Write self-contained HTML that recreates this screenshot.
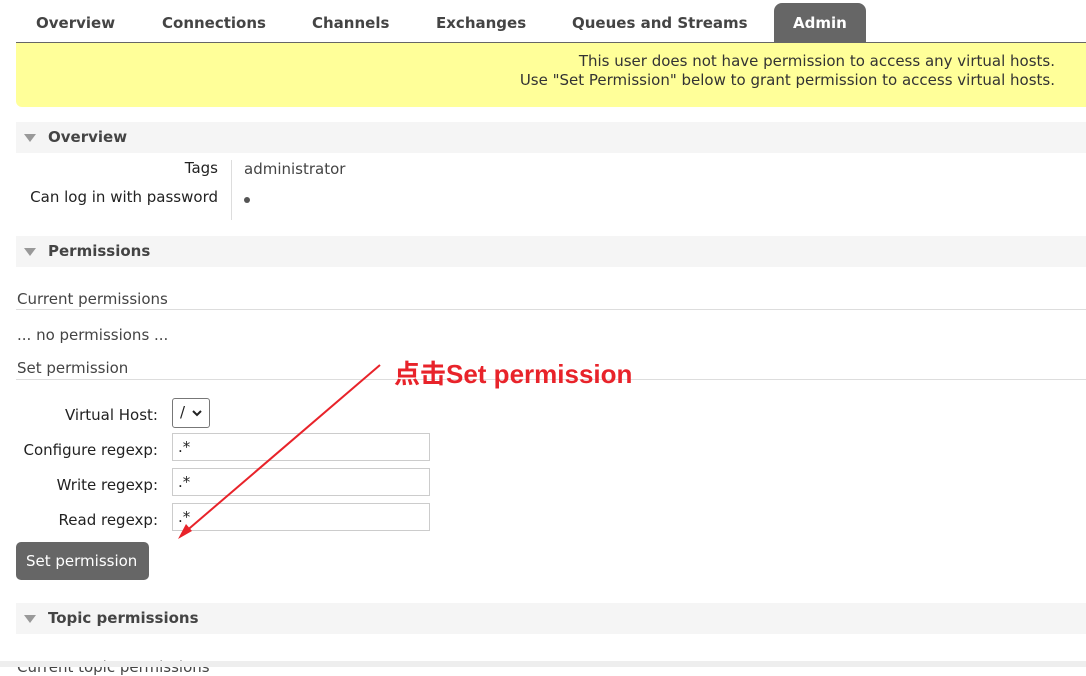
<!DOCTYPE html><html><head><meta charset="utf-8"><style>
body{margin:0;width:1086px;height:667px;overflow:hidden;background:#fff;font-family:"DejaVu Sans",Verdana,sans-serif;font-size:15px;color:#333;position:relative}
.a{position:absolute;white-space:nowrap}
.tab{position:absolute;top:14px;font-weight:bold;font-size:15px;color:#444}
.sec{position:absolute;left:16px;width:1070px;height:31px;background:#f5f5f5}
.sec span{position:absolute;left:32px;top:6px;font-weight:bold;font-size:15px;color:#444}
.sec i{position:absolute;left:8px;top:12px;border-left:6px solid transparent;border-right:6px solid transparent;border-top:8px solid #999}
.in{position:absolute;left:172px;width:256px;height:26px;border:1px solid #ccc;background:#fff}
.in b{position:absolute;left:5px;top:4px;font-weight:normal;color:#222}
.lbl{position:absolute;right:928px;white-space:nowrap;color:#222}
</style></head><body>
<div class="tab" style="left:36px">Overview</div>
<div class="tab" style="left:162px">Connections</div>
<div class="tab" style="left:312px">Channels</div>
<div class="tab" style="left:436px">Exchanges</div>
<div class="tab" style="left:572px">Queues and Streams</div>
<div class="a" style="left:774px;top:3px;width:92px;height:40px;background:#666;border-radius:8px 8px 0 0"></div>
<div class="tab" style="left:793px;color:#fff">Admin</div>
<div class="a" style="left:16px;top:42px;width:1070px;height:1px;background:#666"></div>
<div class="a" style="left:16px;top:43px;width:1070px;height:64px;background:#ffff99;border-radius:0 0 0 6px"></div>
<div class="a" style="right:31px;top:52px;text-align:right;line-height:19px;color:#333">This user does not have permission to access any virtual hosts.<br>Use "Set Permission" below to grant permission to access virtual hosts.</div>
<div class="sec" style="top:122px"><i></i><span>Overview</span></div>
<div class="lbl" style="top:159px;right:868px">Tags</div>
<div class="lbl" style="top:188px;right:868px">Can log in with password</div>
<div class="a" style="left:231px;top:160px;width:1px;height:60px;background:#ddd"></div>
<div class="a" style="left:244px;top:160px;color:#444">administrator</div>
<div class="a" style="left:244px;top:197px;width:6px;height:6px;border-radius:3px;background:#555"></div>
<div class="sec" style="top:236px"><i></i><span>Permissions</span></div>
<div class="a" style="left:17px;top:290px;color:#444">Current permissions</div>
<div class="a" style="left:16px;top:309px;width:1070px;height:1px;background:#ddd"></div>
<div class="a" style="left:17px;top:326px;color:#444">... no permissions ...</div>
<div class="a" style="left:17px;top:359px;color:#444">Set permission</div>
<div class="a" style="left:16px;top:379px;width:1070px;height:1px;background:#ddd"></div>
<div class="lbl" style="top:406px">Virtual Host:</div>
<div class="a" style="left:172px;top:398px;width:36px;height:28px;border:1px solid #777;border-radius:3px;background:#fff"></div>
<div class="a" style="left:180px;top:403px;color:#222">/</div>
<svg class="a" style="left:191px;top:408px" width="12" height="10"><path d="M2 3L6 7L10 3" stroke="#222" stroke-width="2" fill="none"/></svg>
<div class="lbl" style="top:441px">Configure regexp:</div>
<div class="in" style="top:433px"><b>.*</b></div>
<div class="lbl" style="top:476px">Write regexp:</div>
<div class="in" style="top:468px"><b>.*</b></div>
<div class="lbl" style="top:511px">Read regexp:</div>
<div class="in" style="top:503px"><b>.*</b></div>
<div class="a" style="left:16px;top:542px;width:133px;height:38px;background:#666;border-radius:5px"></div>
<div class="a" style="left:26px;top:552px;color:#fff;font-size:15px">Set permission</div>
<div class="sec" style="top:603px"><i></i><span>Topic permissions</span></div>
<div class="a" style="left:17px;top:658px;color:#444">Current topic permissions</div>
<div class="a" style="left:0;top:661px;width:1086px;height:6px;background:#eee"></div>
<div class="a" style="left:394px;top:354px;font-family:'Liberation Sans','Noto Sans CJK SC',sans-serif;font-weight:bold;font-size:26px;color:#e8232a">点击Set permission</div>
<svg class="a" style="left:0;top:0" width="1086" height="667"><line x1="380" y1="365" x2="184" y2="533" stroke="#e8232a" stroke-width="2"/><path d="M178 539L186 524L192 531Z" fill="#e8232a"/></svg>
</body></html>
